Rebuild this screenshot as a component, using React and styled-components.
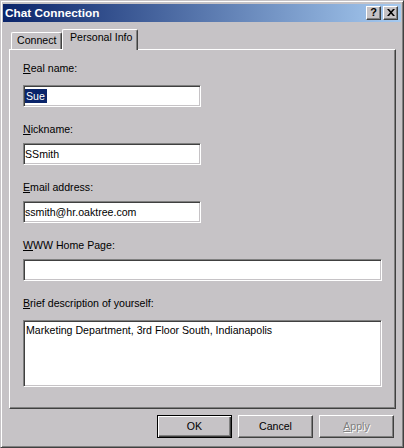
import React from 'react';
import styled, { createGlobalStyle } from 'styled-components';

const FACE = '#c6c3c6';
const DARK = '#404040';
const SHADOW = '#808080';
const NAVY = '#0a246a';

const Global = createGlobalStyle`
  html, body { margin: 0; padding: 0; background: ${FACE}; }
  body {
    font-family: "Liberation Sans", Arial, sans-serif;
    font-size: 10.6px;
    color: #000;
  }
  * { box-sizing: border-box; }
`;

const Window = styled.div`
  width: 404px;
  height: 448px;
  background: ${FACE};
  border: 1px solid;
  border-color: ${FACE} ${DARK} ${DARK} ${FACE};
  box-shadow: inset 1px 1px 0 #fff, inset -1px -1px 0 ${SHADOW};
  padding: 3px 2px 2px 2px;
  display: flex;
  flex-direction: column;
`;

const TitleBar = styled.div`
  height: 18px;
  flex: none;
  background: linear-gradient(to right, ${NAVY}, #a6caf0);
  display: flex;
  align-items: center;
  padding: 0 3px 0 2px;
`;

const Title = styled.div`
  flex: 1;
  color: #fff;
  font-weight: bold;
  font-size: 11.8px;
  line-height: 14px;
`;

const CaptionButtons = styled.div`
  display: flex;
  gap: 2px;
`;

const CapButton = styled.div`
  width: 15px;
  height: 14px;
  background: ${FACE};
  border: 1px solid;
  border-color: #fff ${DARK} ${DARK} #fff;
  box-shadow: inset -1px -1px 0 ${SHADOW};
  display: flex;
  align-items: center;
  justify-content: center;
  font-weight: bold;
  font-size: 11px;
  line-height: 11px;
  padding-bottom: 1px;
`;

const Body = styled.div`
  flex: 1;
  display: flex;
  flex-direction: column;
  padding: 7px 5px 7px 6px;
`;

const TabStrip = styled.div`
  height: 20px;
  flex: none;
  display: flex;
  align-items: flex-end;
  padding-left: 2px;
`;

const Tab = styled.div`
  width: ${p => p.$w}px;
  height: ${p => (p.$active ? 21 : 17)}px;
  margin-bottom: ${p => (p.$active ? -1 : 0)}px;
  position: relative;
  z-index: ${p => (p.$active ? 2 : 0)};
  background: ${FACE};
  border-top: 1px solid #fff;
  border-left: 1px solid #fff;
  border-right: 1px solid ${DARK};
  box-shadow: inset -1px 0 0 ${SHADOW};
  border-radius: 2px 2px 0 0;
  padding: 1px 0 0 ${p => (p.$active ? 7 : 5)}px;
  line-height: 13px;
  white-space: nowrap;
`;

const Panel = styled.div`
  flex: 1;
  display: flex;
  flex-direction: column;
  border: 1px solid;
  border-color: #fff ${DARK} ${DARK} #fff;
  box-shadow: inset -1px -1px 0 ${SHADOW};
  padding: 12px 13px 0 13px;
`;

const Label = styled.div`
  line-height: 13px;
  margin-bottom: ${p => (p.$first ? 10 : 7)}px;
  white-space: nowrap;
`;

const TextBox = styled.div`
  width: ${p => (p.$w ? `${p.$w}px` : '100%')};
  height: ${p => p.$h || 22}px;
  background: #fff;
  border: 1px solid;
  border-color: ${SHADOW} #fff #fff ${SHADOW};
  box-shadow: inset 1px 1px 0 ${DARK}, inset -1px -1px 0 ${FACE};
  padding: ${p => (p.$multi ? '3px 1px 0 2px' : '0 1px')};
  display: flex;
  align-items: ${p => (p.$multi ? 'flex-start' : 'center')};
  line-height: 13px;
  margin-bottom: 16px;
  white-space: nowrap;
  overflow: hidden;
`;

const Selected = styled.span`
  background: ${NAVY};
  color: #fff;
  line-height: 14px;
  padding: 0 2px 0 1px;
`;

const ButtonRow = styled.div`
  flex: none;
  display: flex;
  justify-content: flex-end;
  gap: 6px;
  margin-top: 6px;
  padding-right: 2px;
`;

const Button = styled.div`
  width: 75px;
  height: 23px;
  background: ${FACE};
  display: flex;
  align-items: center;
  justify-content: center;
  line-height: 13px;
  border: 1px solid;
  border-color: ${p => (p.$default ? '#000' : `#fff ${DARK} ${DARK} #fff`)};
  box-shadow: ${p =>
    p.$default
      ? `inset 1px 1px 0 #fff, inset -1px -1px 0 ${DARK}, inset -2px -2px 0 ${SHADOW}`
      : `inset -1px -1px 0 ${SHADOW}`};
  color: ${p => (p.$disabled ? SHADOW : '#000')};
  text-shadow: ${p => (p.$disabled ? '1px 1px 0 #fff' : 'none')};
`;

const Key = styled.u`
  text-decoration: underline;
  text-underline-offset: 1px;
`;

const CloseIcon = () => (
  <svg width="8" height="7" viewBox="0 0 8 7">
    <path d="M0 0h2l2 2.2L6 0h2L5 3.5 8 7H6L4 4.8 2 7H0l3-3.5z" fill="#000" />
  </svg>
);

export default function App() {
  return (
    <>
      <Global />
      <Window>
        <TitleBar>
          <Title>Chat Connection</Title>
          <CaptionButtons>
            <CapButton>?</CapButton>
            <CapButton><CloseIcon /></CapButton>
          </CaptionButtons>
        </TitleBar>
        <Body>
          <TabStrip>
            <Tab $w={51}>Connect</Tab>
            <Tab $w={76} $active>Personal Info</Tab>
          </TabStrip>
          <Panel>
            <Label $first><Key>R</Key>eal name:</Label>
            <TextBox $w={178}><Selected>Sue</Selected></TextBox>
            <Label><Key>N</Key>ickname:</Label>
            <TextBox $w={178}>SSmith</TextBox>
            <Label><Key>E</Key>mail address:</Label>
            <TextBox $w={178}>ssmith@hr.oaktree.com</TextBox>
            <Label><Key>W</Key>WW Home Page:</Label>
            <TextBox />
            <Label $first><Key>B</Key>rief description of yourself:</Label>
            <TextBox $h={67} $multi>Marketing Department, 3rd Floor South, Indianapolis</TextBox>
          </Panel>
          <ButtonRow>
            <Button $default>OK</Button>
            <Button>Cancel</Button>
            <Button $disabled><Key>A</Key>pply</Button>
          </ButtonRow>
        </Body>
      </Window>
    </>
  );
}
